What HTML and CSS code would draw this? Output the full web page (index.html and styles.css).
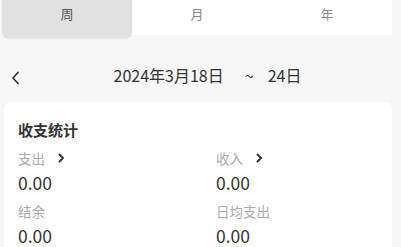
FILE: index.html
```html
<!DOCTYPE html>
<html lang="zh">
<head>
<meta charset="utf-8">
<link rel="stylesheet" href="styles.css">
</head>
<body>
<div class="tabs">
  <div class="tab active">周</div>
  <div class="tab">月</div>
  <div class="tab">年</div>
</div>
<div class="date-row">
  <span class="back">
    <svg width="9" height="14" viewBox="0 0 9 14"><path d="M7 1.5 L2 7 L7 12.5" fill="none" stroke="#333" stroke-width="1.7" stroke-linecap="round" stroke-linejoin="round"/></svg>
  </span>
  <span class="date">2024年3月18日<span class="tilde">~</span>24日</span>
</div>
<div class="card">
  <div class="title">收支统计</div>
  <div class="grid">
    <div class="item">
      <div class="label">支出 <svg class="arrow" width="7" height="10" viewBox="0 0 7 10"><path d="M1.5 1.5 L5 5 L1.5 8.5" fill="none" stroke="#333" stroke-width="1.9" stroke-linecap="round" stroke-linejoin="round"/></svg></div>
      <div class="value">0.00</div>
    </div>
    <div class="item">
      <div class="label">收入 <svg class="arrow" width="7" height="10" viewBox="0 0 7 10"><path d="M1.5 1.5 L5 5 L1.5 8.5" fill="none" stroke="#333" stroke-width="1.9" stroke-linecap="round" stroke-linejoin="round"/></svg></div>
      <div class="value">0.00</div>
    </div>
    <div class="item">
      <div class="label">结余</div>
      <div class="value">0.00</div>
    </div>
    <div class="item">
      <div class="label">日均支出</div>
      <div class="value">0.00</div>
    </div>
  </div>
</div>
</body>
</html>
```
FILE: styles.css
```css
html, body {
  margin: 0;
  padding: 0;
}
body {
  background: #f7f7f7;
  font-family: "Noto Sans CJK SC", "Noto Sans", sans-serif;
  color: #333;
  width: 401px;
  height: 247px;
  overflow: hidden;
}
.tabs {
  display: grid;
  grid-template-columns: 130px 130px 130px;
  margin-left: 2px;
  width: 390px;
  height: 35px;
  background: #fff;
}
.tab {
  display: flex;
  justify-content: center;
  height: 35px;
  line-height: 27px;
  font-size: 13px;
  color: #8a8a8a;
}
.tab.active {
  height: 38px;
  background: #e1e1e1;
  color: #555;
  border-radius: 0 0 6px 6px;
  box-shadow: 0 1px 2px rgba(0,0,0,0.06);
}
.date-row {
  position: relative;
  display: flex;
  align-items: center;
  justify-content: center;
  height: 67px;
  padding-top: 13px;
  box-sizing: border-box;
}
.back {
  position: absolute;
  left: 11px;
  top: 36px;
  display: flex;
}
.date {
  font-size: 16px;
  color: #333;
  margin-left: 14px;
}
.tilde {
  margin: 0 14px 0 21px;
}
.card {
  margin-left: 4px;
  width: 388px;
  background: #fff;
  border-radius: 8px;
  padding: 18px 0 0 14px;
  box-sizing: border-box;
  height: 150px;
}
.title {
  font-size: 15px;
  font-weight: bold;
  color: #333;
  line-height: 20px;
}
.grid {
  display: grid;
  grid-template-columns: 198px 1fr;
  margin-top: 8px;
}
.label {
  font-size: 13.5px;
  color: #ababab;
  line-height: 20px;
  display: flex;
  align-items: center;
  gap: 13px;
}
.value {
  font-size: 17.5px;
  color: #333;
  line-height: 24px;
  margin-top: 3px;
  margin-bottom: 6px;
}
```
